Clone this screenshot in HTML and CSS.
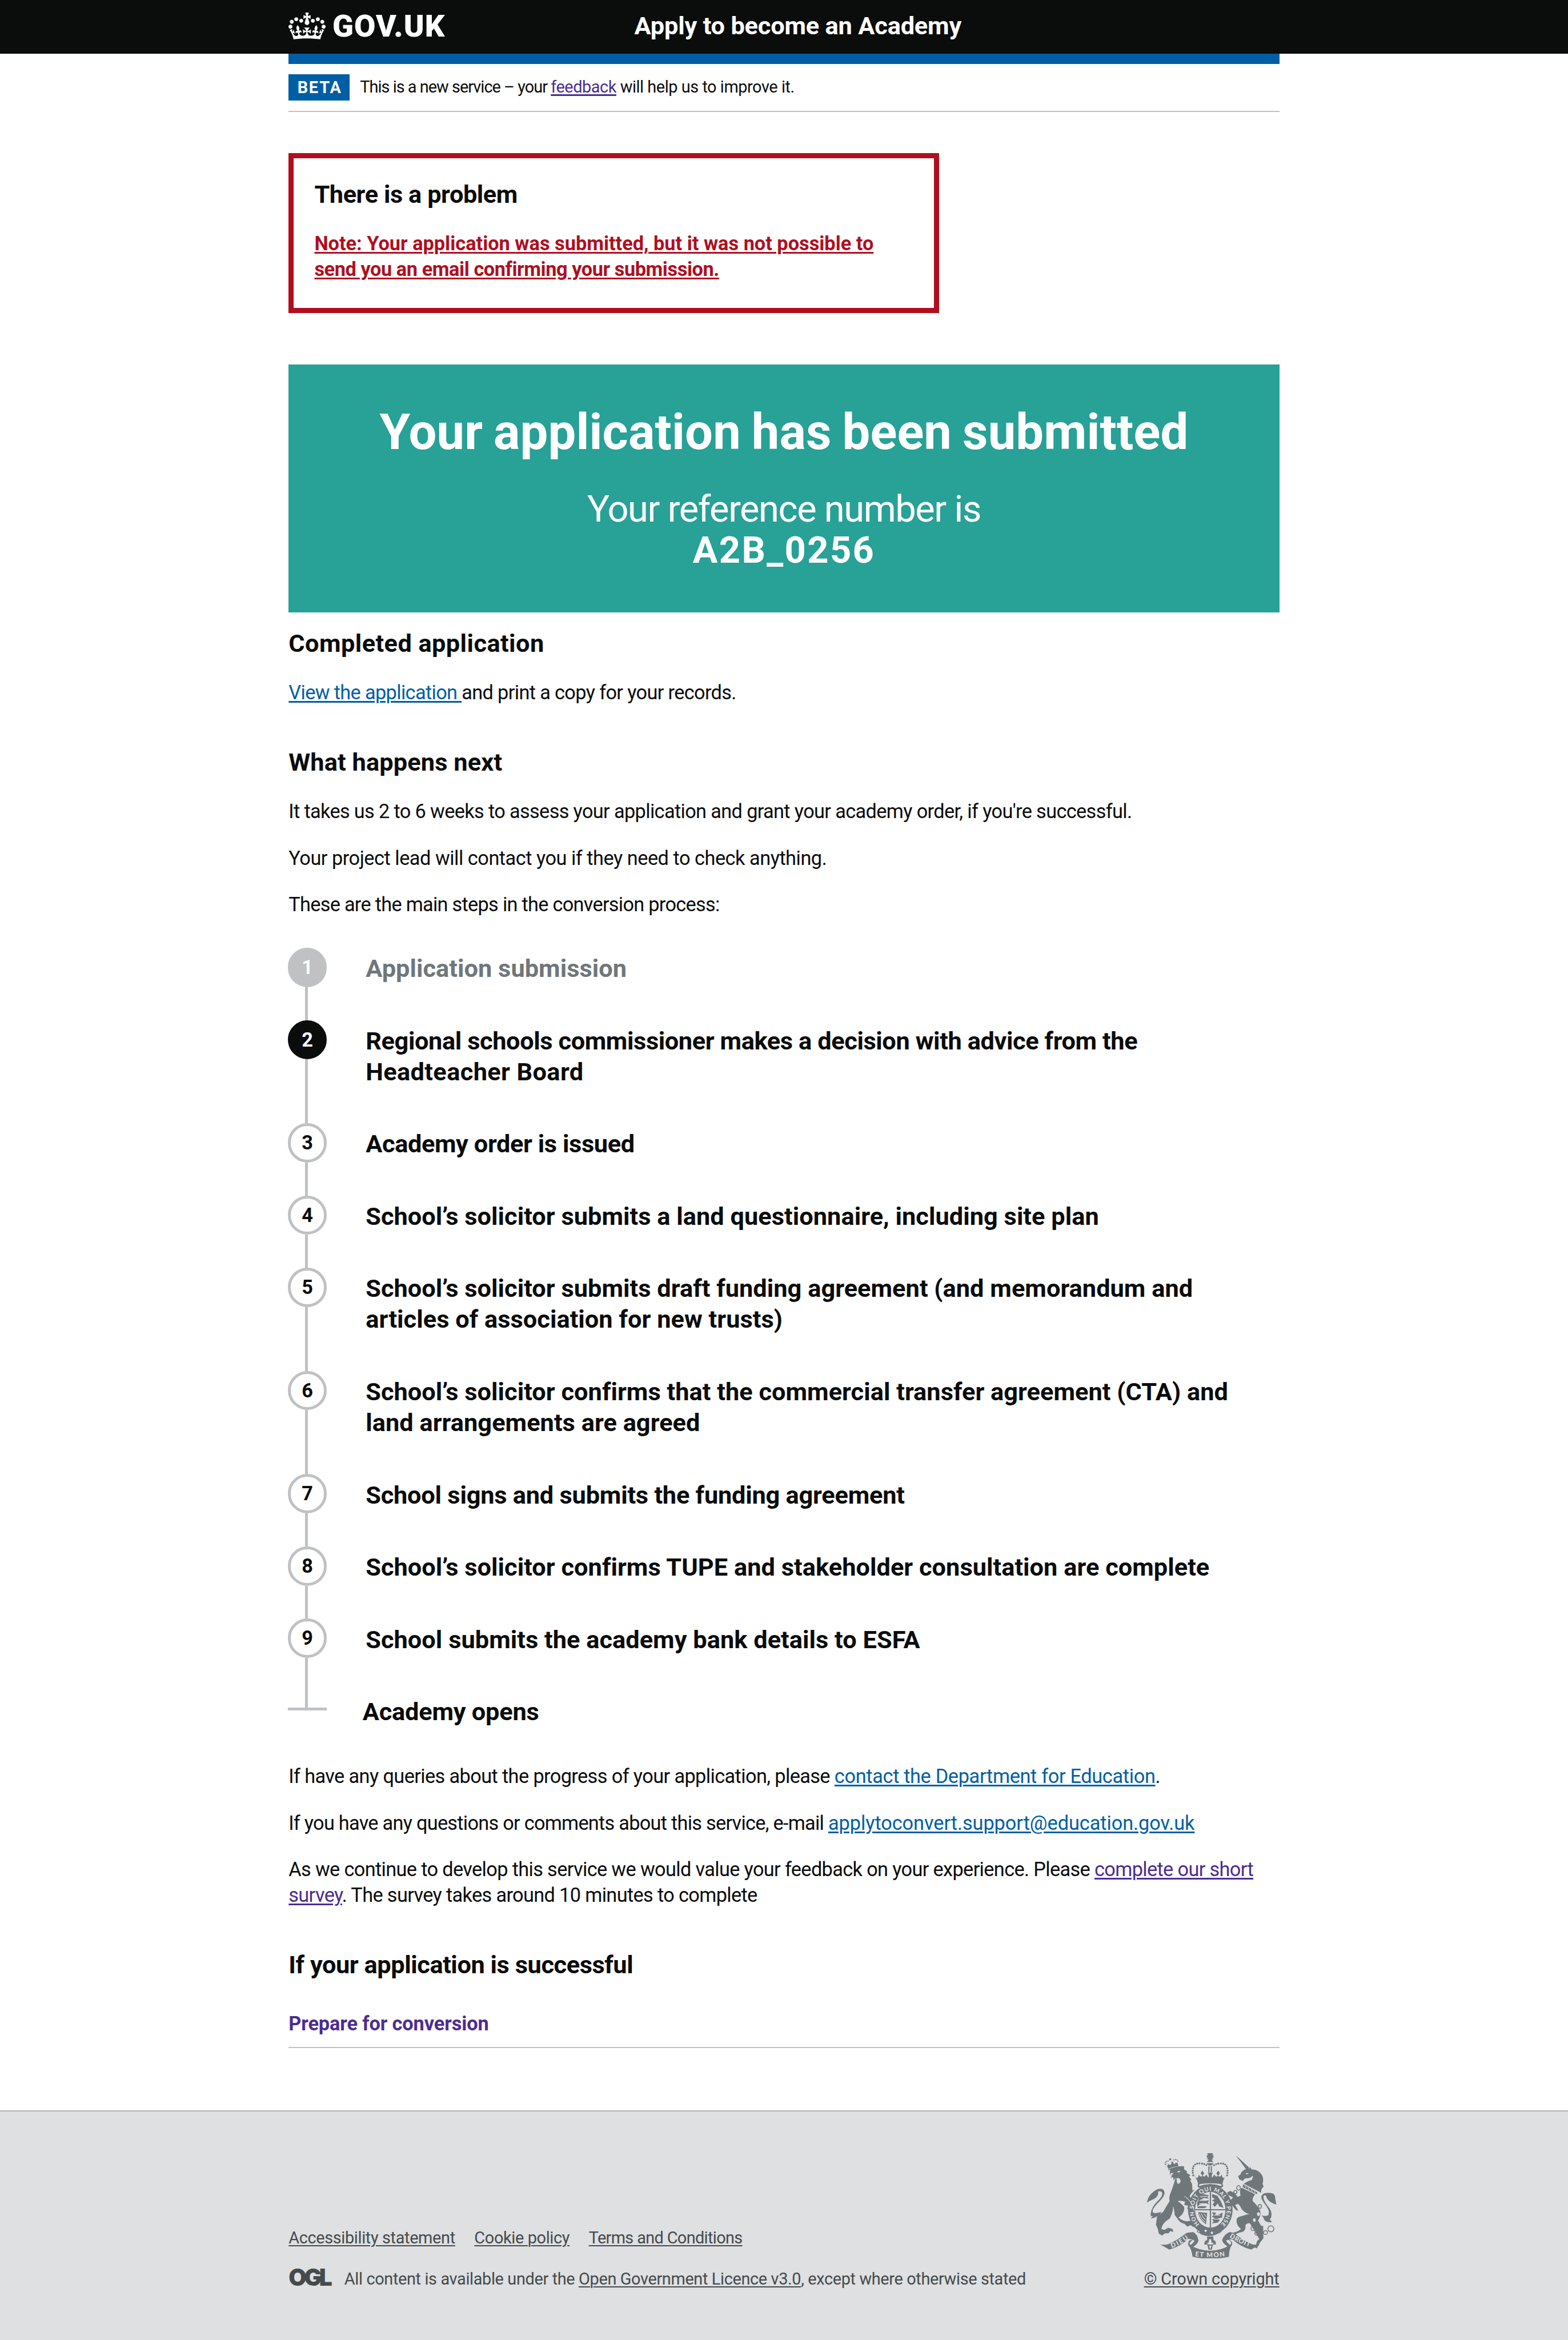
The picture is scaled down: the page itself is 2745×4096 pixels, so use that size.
FILE: index.html
```html
<!DOCTYPE html>
<html lang="en">
<head>
<meta charset="utf-8">
<title>Application submitted - Apply to become an Academy - GOV.UK</title>
<link rel="stylesheet" href="styles.css">
</head>
<body>
<header class="header">
  <div class="container header-row">
    <a class="logo" href="#">
      <svg class="crown" viewBox="0 0 132 97" preserveAspectRatio="none" aria-hidden="true"><path fill="currentColor" fill-rule="evenodd" d="M25 30.2c3.5 1.5 7.7-.2 9.1-3.7 1.5-3.6-.2-7.8-3.9-9.2-3.6-1.4-7.6.3-9.1 3.9-1.4 3.5.3 7.5 3.9 9zM9 39.5c3.6 1.5 7.8-.2 9.2-3.7 1.5-3.6-.2-7.8-3.9-9.1-3.6-1.5-7.6.2-9.1 3.8-1.4 3.5.3 7.5 3.8 9zM4.4 57.2c3.5 1.5 7.7-.2 9.1-3.8 1.5-3.6-.2-7.7-3.9-9.1-3.5-1.5-7.6.3-9.1 3.8-1.4 3.5.3 7.6 3.9 9.1zm38.3-21.4c3.5 1.5 7.7-.2 9.1-3.8 1.5-3.6-.2-7.7-3.9-9.1-3.6-1.5-7.6.3-9.1 3.8-1.3 3.6.4 7.7 3.9 9.1zm64.4-5.6c-3.6 1.5-7.8-.2-9.1-3.7-1.5-3.6.2-7.8 3.8-9.2 3.6-1.4 7.7.3 9.2 3.9 1.3 3.5-.4 7.5-3.9 9zm15.9 9.3c-3.6 1.5-7.7-.2-9.1-3.7-1.5-3.6.2-7.8 3.7-9.1 3.6-1.5 7.7.2 9.2 3.8 1.5 3.5-.3 7.5-3.8 9zm4.7 17.7c-3.6 1.5-7.8-.2-9.2-3.8-1.5-3.6.2-7.7 3.9-9.1 3.6-1.5 7.7.3 9.2 3.8 1.3 3.5-.4 7.6-3.9 9.1zM89.3 35.8c-3.6 1.5-7.8-.2-9.2-3.8-1.4-3.6.2-7.7 3.9-9.1 3.6-1.5 7.7.3 9.2 3.8 1.4 3.6-.3 7.7-3.9 9.1zM69.7 17.7l8.9 4.7V9.3l-8.9 2.8c-.2-.3-.5-.6-.9-.9L72.4 0H59.6l3.5 11.2c-.3.3-.6.5-.9.9l-8.8-2.8v13.1l8.8-4.7c.3.3.6.7.9.9l-5 15.4v.1c-.2.8-.4 1.6-.4 2.4 0 4.1 3.1 7.5 7 8.1h.2c.3 0 .7.1 1 .1.4 0 .7 0 1-.1h.2c4-.6 7.1-4.1 7.1-8.1 0-.8-.1-1.7-.4-2.4V34l-5.1-15.4c.4-.2.7-.6 1-.9zM66 92.8c16.9 0 32.8 1.1 47.1 3.2 4-16.9 8.9-26.7 14-33.5l-9.6-3.4c1 4.9 1.1 7.2 0 10.2-1.5-1.4-3-4.3-4.2-8.7L108.6 76c2.8-2 5-3.2 7.5-3.3-4.4 9.4-10 11.9-13.6 11.2-4.3-.8-6.3-4.6-5.6-7.9 1-4.7 5.7-5.9 8-.5 4.3-8.7-3-11.4-7.6-8.8 7.1-7.2 7.9-13.5 2.1-21.1-8 6.1-8.1 12.3-4.5 20.8-4.7-5.4-12.1-2.5-9.5 6.2 3.4-5.2 7.9-2 7.2 3.1-.6 4.3-6.4 7.8-13.5 7.2-10.3-.9-10.9-8-11.2-13.8 2.5-.5 7.1 1.8 11 7.3L80.2 60c-4.1 4.4-8 5.3-12.3 5.4 1.4-4.4 8-11.6 8-11.6H55.5s6.4 7.2 7.9 11.6c-4.2-.1-8-1-12.3-5.4l1.4 16.4c3.9-5.5 8.5-7.7 10.9-7.3-.3 5.8-.9 12.8-11.1 13.8-7.2.6-12.9-2.9-13.5-7.2-.7-5 3.8-8.3 7.1-3.1 2.7-8.7-4.6-11.6-9.4-6.2 3.7-8.5 3.6-14.7-4.6-20.8-5.8 7.6-5 13.9 2.2 21.1-4.7-2.6-11.9.1-7.7 8.8 2.3-5.5 7.1-4.2 8.1.5.7 3.3-1.3 7.1-5.7 7.9-3.5.7-9-1.8-13.5-11.2 2.5.1 4.7 1.3 7.5 3.3l-4.7-15.4c-1.2 4.4-2.7 7.2-4.3 8.7-1.1-3-.9-5.3 0-10.2l-9.5 3.4c5 6.9 9.9 16.7 14 33.5 14.8-2.1 30.8-3.2 47.7-3.2z"/></svg>
      <span class="logo-text">GOV.UK</span>
    </a>
    <a class="service-name" href="#">Apply to become an Academy</a>
  </div>
</header>

<div class="container">
  <div class="header-bar"></div>
  <div class="phase-banner">
    <strong class="tag">BETA</strong>
    <span class="phase-text"><span class="phase-lead">This is a new service – your </span><a class="link visited" href="#">feedback</a> will help us to improve it.</span>
  </div>

  <main>
    <section class="error-summary">
      <h2 class="heading">There is a problem</h2>
      <a class="link error-link" href="#">Note: Your application was submitted, but it was not possible to <span class="error-end">send you an email confirming your submission.</span></a>
    </section>

    <section class="panel">
      <h1 class="panel-title">Your application has been submitted</h1>
      <p class="panel-body">Your reference number is<br><strong class="panel-ref">A2B_0256</strong></p>
    </section>

    <h2 class="heading heading-first">Completed application</h2>
    <p class="body"><a class="link" href="#">View the application </a>and print a copy for your records.</p>

    <h2 class="heading heading-next heading-what">What happens next</h2>
    <p class="body">It takes us 2 to 6 weeks to assess your application and grant your academy order, if you're successful.</p>
    <p class="body body-lead">Your project lead will contact you if they need to check anything.</p>
    <p class="body body-steps">These are the main steps in the conversion process:</p>

    <ol class="steps">
      <li class="step step-done"><div class="marker"><span class="circle">1</span></div><h3 class="step-title">Application submission</h3></li>
      <li class="step step-active"><div class="marker"><span class="circle">2</span></div><h3 class="step-title"><span class="tight">Regional schools commissioner makes a decision with advice from the</span> <span class="loose">Headteacher Board</span></h3></li>
      <li class="step"><div class="marker"><span class="circle">3</span></div><h3 class="step-title tight">Academy order is issued</h3></li>
      <li class="step"><div class="marker"><span class="circle">4</span></div><h3 class="step-title">School’s solicitor submits a land questionnaire, including site plan</h3></li>
      <li class="step"><div class="marker"><span class="circle">5</span></div><h3 class="step-title">School’s solicitor submits draft funding agreement (and memorandum and articles of association for new trusts)</h3></li>
      <li class="step"><div class="marker"><span class="circle">6</span></div><h3 class="step-title">School’s solicitor confirms that the commercial transfer agreement (CTA) and land arrangements are agreed</h3></li>
      <li class="step"><div class="marker"><span class="circle">7</span></div><h3 class="step-title snug">School signs and submits the funding agreement</h3></li>
      <li class="step"><div class="marker"><span class="circle">8</span></div><h3 class="step-title">School’s solicitor confirms TUPE and stakeholder consultation are complete</h3></li>
      <li class="step"><div class="marker"><span class="circle">9</span></div><h3 class="step-title">School submits the academy bank details to ESFA</h3></li>
      <li class="step step-end"><div class="marker"></div><h3 class="step-title snug">Academy opens</h3></li>
    </ol>

    <p class="body"><span class="query-lead">If have any queries about the progress of your application, please </span><a class="link query-link" href="#">contact the Department for Education</a>.</p>
    <p class="body"><span class="email-lead">If you have any questions or comments about this service, e-mail </span><a class="link email" href="#">applytoconvert.support@education.gov.uk</a></p>
    <p class="body body-survey">As we continue to develop this service we would value your feedback on your experience. Please <a class="link visited" href="#">complete our short survey</a>. The survey takes around 10 minutes to complete</p>

    <h2 class="heading heading-next">If your application is successful</h2>
    <a class="prepare" href="#">Prepare for conversion</a>
  </main>
</div>

<footer class="footer">
  <div class="container footer-row">
    <div class="footer-meta">
      <nav class="footer-links">
        <a class="link" href="#">Accessibility statement</a>
        <a class="link" href="#">Cookie policy</a>
        <a class="link terms" href="#">Terms and Conditions</a>
      </nav>
      <div class="licence">
        <span class="ogl">OGL</span>
        <span>All content is available under the <a class="link" href="#">Open Government Licence v3.0</a>, except where otherwise stated</span>
      </div>
    </div>
    <div class="copyright">
      <svg class="crest" viewBox="204 113 870 709" aria-hidden="true">
        <defs>
          <path id="garter" d="M557 590A111 127 0 1 1 681 605"/>
          <path id="ribbon-left" d="M370 749Q425 730 486 686"/>
          <path id="ribbon-mid" d="M526 804Q628 818 732 804"/>
          <path id="ribbon-right" d="M757 676Q820 720 900 742"/>
        </defs>
        <g fill="currentColor">
          <!-- crown over the shield -->
          <path d="M608 113h40l-8 16 10-6v24l-10-7 8 15h-40l8-15-10 7v-24l10 6zM622 152h12l16 20h-44z"/>
          <path d="M606 180h44q-3 14-22 16-19-2-22-16zM616 200h8v40h-8zM632 200h8v40h-8z"/>
          <path d="M522 260q10 22 18 20 10-6 12-24 12 24 24 8l-12-16 12-18 12 18-10 16q12 16 24-8l14 22q8-14-4-36h34q-12 22-4 36l14-22q12 24 24 8l-10-16 12-18 12 18-12 16q12 16 24-8 2 18 12 24 8 2 18-20-20 28-26 60-82-20-162 0-6-32-30-60z"/>
          <path d="M548 312q80-16 162 0l6 22q-8 14-18 12-70-30-140 0-14-2-14-14zM560 320q-10 8-6 14 74-28 148 0 6-8-2-14-70-10-140 0z" fill-rule="evenodd"/>
          <!-- lion -->
          <path d="M326 186q4 14 16 14 6-6 4-16 10 10 18 6 8-8 2-20 14-4 18 14 8 6 14-10 4 8 12 2l4 24q-34 2-64 18-10-16-24-32z"/>
          <path d="M348 222q44-24 104-22l2 22 20 14-4 8 26 18-10 8 16 20-8 6 12 22q4 30 2 46l16-6-24 26-10 18q24 26 34 52l10 28-4 20-16-14-12 18-10-22-18 4 6-22-26-6 6-22-30-6-20 2q22 14 42 38 8 26-14 54-14 12-22 20 30 26 60 24l36-4 28 14 2 24-18-10-8 16-18-14-24 10-18-18q-34-8-50-40l-16-20q-2-34-10-60-2 50-24 84-36 20-50 50l-6 20 22 6 24-14 30 8 4 20-20-6-10 14-28 2-16 14-22-12-8-34-12-26 8-60 40-26q20-36 44-74-6-24 4-48 24-60 36-110l-14 20-2-24-14 8 6-30-16 8 4-34-14 4 6-30-16-10-2-18z"/>
          <path d="M204 446q6-56 68-90 44-14 50 22 0 24-30 54-38 36-48 60-8 22 14 24 20-2 44-10-20 36-72 46l14-18-20 4q10-6 4-16 6-50 50-90 34-34 28-52-8-16-28-10 8 36-38 56-22 8-36 20z"/>
          <!-- unicorn -->
          <path d="M802 130l10 8 78 72-16 16z"/>
          <path d="M892 200l16 22q46 0 68 38 14 26 4 60l8 16q-22 20-16 44l-118-62q28-20 52-24 12-16 8-30-22 24-42 16-16 4-24 20l-24-12-8-22 14-8q14-42 66-44z"/>
          <path d="M842 346l88 42q-22 30-16 46 34 32 50 66 10 24-14 66l20 34 14 2 2 82-22 28-22 40-12-4 14-46 14-12q-26-46-44-74-18-34-24-34-32 4-24 32-4 24-24 28-46 6-64 36l-30 4 14-26 54-20 20-14q-36-26-30-66 4-16 46-24 20-10 42-8-48-14-64-54l-14-18-20 8 22 40-18-6-34-42-4-22 20-20-36-18-2-16 20-10 28 16 22 24 18-8-4-30 8-20z"/>
          <path d="M1073 458q-60-16-70-60-20-8-16 16 6 30 38 66 30 42 4 80l16 14q-50 12-60-30l-12-14q46 12 48-8 8-24-20-60-36-44-28-62 12-24 50-20 44 0 42 36z"/>
          <!-- ribbons and fleur-de-lis -->
          <path d="M292 726q36 6 58-4 60-26 120-74l44-6q30 14 36 60-10 26-42 44l-14-16q26-16 28-32l-40-10q-56 54-128 72zM962 726q-36 6-58-4-60-26-116-74l-28-6q-40 14-52 56 10 30 48 46l8-14q-26-18-28-32l40-8q56 52 128 70z"/>
          <path d="M482 708q10-18 28-8-24 8-18 28 60 40 136 40t138-42q10-20-16-32 30 4 26 34-20 22-22 80-120 28-244 0-8-58-30-78z"/>
          <path d="M608 672h42v24q20 4 16 32l-18-2q-4 10-8 34h-24q-2-20-8-34l-18 2q-4-28 18-32z"/>
          <!-- garter round the shield -->
          <ellipse cx="629" cy="493" rx="150" ry="166"/>
        </g>
        <g fill="#dee0e2">
          <ellipse cx="629" cy="493" rx="102" ry="120"/>
          <path d="M362 248l18-4q0 16-18 12zM408 236l18-6q2 14-16 12zM400 284q24-14 30 16-4 20-20 18-8-12-6-26zM866 246l22 2-14 8z"/>
          <ellipse cx="953" cy="522" rx="10" ry="13"/><ellipse cx="925" cy="562" rx="9" ry="12"/>
          <path d="M622 690h12l4 24h14l-8 12h-30l-8-12h12zM622 734h14l-4 20h-6z"/>
        </g>
        <g fill="currentColor">
          <path d="M545 590q60 52 165 48-80 54-150 16z"/>
          <path d="M626 374h8v240h-8zM528 489h204v8H528z"/>
          <path d="M560 398l26-10 34 8-10 12 12 10-34-4-26 10 24 4 36 2-10 14 10 12-30-6-36 8-12 14 24-4 40 2-16 12H544l-4-34zM640 386l38 14 24 40 16 40-30-10-8-20-20 24-16-16 14-18-18-10 20-10-18-10zM548 508l60 6-8 78-20-18q-30-30-32-66zM640 510l30 2-12 12 20 4 34-16-4 34-32 6 18 10-16 18-38 4 12-14-12-12 20-8-20-10 10-12z"/>
          <path d="M850 322l96 56-6 10-94-48z"/>
        </g>
        <g fill="#dee0e2"><circle cx="598" cy="634" r="8"/><circle cx="640" cy="648" r="8"/></g>
        <g fill="none" stroke="#dee0e2" stroke-width="4">
          <path d="M556 518q6 34 40 60M570 518q4 24 28 42M586 520l14 18M456 402q30 20 46 50l20 50M560 404h50M556 430h52M556 452h50M652 530h44M652 556h40"/>
          <path d="M862 334l8 14M882 345l8 14M904 357l8 14M924 369l8 14"/>
        </g>
        <g fill="none" stroke="currentColor" stroke-width="13" stroke-linecap="round" stroke-dasharray="0 15.5">
          <path d="M514 262Q498 176 562 182Q596 184 606 196M742 262Q758 176 694 182Q662 184 652 196"/>
        </g>
        <g fill="none" stroke="currentColor" stroke-width="8" stroke-linecap="round" stroke-dasharray="0 11">
          <path d="M326 186Q326 162 354 166M384 158Q412 148 412 176"/>
        </g>
        <path d="M351 150l14-3 2 12-12 2z" fill="currentColor"/>
        <g fill="none" stroke="currentColor" stroke-width="6">
          <circle cx="1036" cy="621" r="20"/><circle cx="1000" cy="646" r="13"/><ellipse cx="943" cy="652" rx="15" ry="12"/><ellipse cx="915" cy="618" rx="12" ry="15"/><ellipse cx="819" cy="346" rx="12" ry="15"/><ellipse cx="962" cy="470" rx="11" ry="13"/><circle cx="797" cy="374" r="11"/><ellipse cx="806" cy="440" rx="13" ry="14"/><path d="M560 602q-24 10-10 24-18 16 6 20 14-2 14-18 26-8 10-26-10-8-20 0z"/>
        </g>
        <g fill="#dee0e2">
          <text class="crest-ring"><textPath href="#garter" textLength="590">HON SOIT QUI MAL Y PENSE</textPath></text>
          <text class="crest-motto"><textPath href="#ribbon-left" textLength="130">DIEU</textPath></text>
          <text class="crest-motto"><textPath href="#ribbon-mid" textLength="202">ET MON</textPath></text>
          <text class="crest-motto"><textPath href="#ribbon-right" textLength="150">DROIT</textPath></text>
        </g>
      </svg>
      <a class="link copyright-link" href="#">© Crown copyright</a>
    </div>
  </div>
</footer>
</body>
</html>
```
FILE: styles.css
```css
/* 1rem is ten layout units */
html { font-size: 18.067px; }
* { box-sizing: border-box; }
body {
  margin: 0;
  min-height: 100vh;
  display: flex;
  flex-direction: column;
  background: #fff;
  color: #0b0c0c;
  font-family: Roboto, "Liberation Sans", sans-serif;
  font-size: 1.9rem;
  line-height: 2.5rem;
}
h1, h2, h3, p, ol { margin: 0; padding: 0; }
.container { width: 96rem; margin: 0 auto; }

.link {
  color: #005ea5;
  text-decoration: underline;
  text-decoration-thickness: .14rem;
  text-underline-offset: .14rem;
}
.visited { color: #4c2c92; }

/* header */
.header { background: #0b0c0c; color: #fff; }
.header a { color: #fff; text-decoration: none; }
.header-row {
  display: grid;
  grid-template-columns: 33.5rem 1fr;
  height: 5.2rem;
  align-items: center;
}
.logo { display: flex; align-items: center; gap: .65rem; padding-bottom: .15rem; }
.crown { width: 3.6rem; height: 2.62rem; }
.logo-text { font-size: 3rem; line-height: 3rem; font-weight: 900; letter-spacing: .06rem; }
.service-name { font-size: 2.4rem; font-weight: 700; letter-spacing: -.011rem; padding-bottom: .1rem; }
.header-bar { height: 1rem; background: #005ea5; }

.phase-banner {
  display: flex;
  align-items: center;
  gap: 1rem;
  padding: 1rem 0;
  border-bottom: 2px solid #bfc1c3;
  font-size: 1.6rem;
}
.tag {
  height: 2.53rem;
  line-height: 2.65rem;
  padding: 0 .75rem 0 .85rem;
  background: #005ea5;
  color: #fff;
  letter-spacing: .1rem;
}
.phase-text { letter-spacing: -.025rem; }
.phase-lead { letter-spacing: -.054rem; }

.heading { padding-top: .06rem; font-size: 2.4rem; line-height: 3rem; font-weight: 700; letter-spacing: -.025rem; margin-bottom: 1.94rem; }
.heading-first { margin-top: 1.5rem; letter-spacing: .023rem; }
.heading-next { margin-top: 3.94rem; }
.heading-what { letter-spacing: .005rem; }
.body { padding-top: .06rem; letter-spacing: -.036rem; margin-bottom: 1.94rem; }
.body-lead { letter-spacing: -.027rem; }
.body-steps { letter-spacing: -.04rem; }
.body-survey { letter-spacing: -.036rem; }
.query-lead { letter-spacing: -.034rem; }
.query-link { letter-spacing: -.019rem; }
.email-lead { letter-spacing: -.041rem; }
.email { letter-spacing: -.004rem; }

.error-summary {
  width: 63rem;
  margin-top: 4rem;
  padding: 2rem 2rem 2.5rem;
  border: .5rem solid #b10e1e;
}
.error-link { color: #b10e1e; font-weight: 700; display: block; }
.error-end { letter-spacing: -.024rem; }

.panel { margin-top: 5rem; padding: 4rem; background: #28a197; color: #fff; text-align: center; }
.panel-title { padding-top: .1rem; font-size: 4.8rem; line-height: 5rem; letter-spacing: .008rem; word-spacing: -.16rem; margin-bottom: 2.9rem; }
.panel-body { font-size: 3.6rem; line-height: 4rem; letter-spacing: -.081rem; }
.panel-ref { letter-spacing: .13rem; }

/* step list */
.steps { list-style: none; margin-top: 2.94rem; }
.step { display: flex; min-height: 7rem; }
.marker {
  flex: none;
  width: 3.8rem;
  margin-left: -.08rem;
  display: flex;
  flex-direction: column;
  align-items: center;
}
.marker::after { content: ""; flex: 1; width: .28rem; margin-left: -.16rem; background: #bfc1c3; }
.circle {
  width: 3.8rem;
  height: 3.8rem;
  border: .28rem solid #bfc1c3;
  border-radius: 50%;
  line-height: 3.25rem;
  font-weight: 700;
  text-align: center;
}
.step-done .circle { background: #bfc1c3; color: #fff; }
.step-active .circle { background: #0b0c0c; border-color: #0b0c0c; color: #fff; }
.step-title {
  width: 86rem;
  margin-left: 3.75rem;
  padding: .56rem 0 3.44rem;
  font-size: 2.4rem;
  line-height: 3rem;
  letter-spacing: .001rem;
}
.tight { letter-spacing: -.023rem; }
.snug { letter-spacing: -.013rem; }
.loose { letter-spacing: .02rem; }
.step-done .step-title { color: #6f777b; }
.step-end .marker { height: 1.88rem; border-bottom: .28rem solid #bfc1c3; }
.step-end .step-title { margin-left: 3.45rem; }

.prepare {
  display: block;
  margin-top: 2.94rem;
  padding-bottom: 1rem;
  border-bottom: 2px solid #bfc1c3;
  color: #4c2c92;
  font-weight: 700;
  letter-spacing: -.006rem;
  text-decoration: none;
}

/* footer */
.footer {
  flex: 1;
  margin-top: 6rem;
  padding-top: 4.04rem;
  border-top: 2px solid #b1b4b6;
  background: #dee0e2;
  color: #454a4c;
  font-size: 1.6rem;
  line-height: 2rem;
  letter-spacing: -.02rem;
}
.footer .link { color: #454a4c; text-decoration-thickness: .12rem; }
.footer-row { display: flex; justify-content: space-between; align-items: flex-end; }
.footer-links { display: flex; gap: 1.86rem; margin-bottom: 2rem; }
.terms { letter-spacing: -.036rem; }
.licence { display: flex; gap: .8rem; }
.ogl { width: 4.6rem; font-family: Inter, sans-serif; font-weight: 900; font-size: 2.25rem; line-height: 1.8rem; letter-spacing: -.24rem; }
.copyright { display: flex; flex-direction: column; align-items: flex-end; }
.copyright-link { letter-spacing: -.007rem; }
.crest { display: block; width: 12.55rem; height: 10.23rem; margin: 0 .25rem .97rem 0; color: #6f777b; }
.crest-motto { font: 900 44px Lato, sans-serif; letter-spacing: 0; }
.crest-ring { font: 900 38px Lato, sans-serif; letter-spacing: 0; }
```
